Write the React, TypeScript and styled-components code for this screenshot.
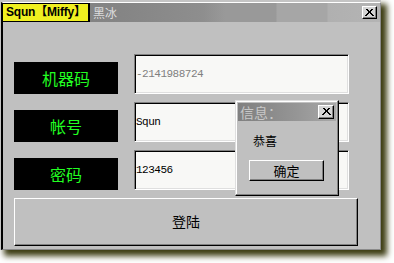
import React from 'react'
import styled, { createGlobalStyle } from 'styled-components'

const GlobalStyle = createGlobalStyle`
  html, body {
    margin: 0;
    padding: 0;
    background: #ffffff;
  }
  body {
    font-family: "Liberation Sans", "Noto Sans CJK SC", sans-serif;
  }
`

const rows = [
    { label: '机器码', value: '-2141988724', muted: true },
    { label: '帐号', value: 'Squn', muted: false },
    { label: '密码', value: '123456', muted: false },
]

const App = () => {
    return (
        <Page>
            <GlobalStyle />
            <Window>
                <Frame>
                    <TitleBar>
                        <Tag>Squn【Miffy】</Tag>
                        <TitleText>黑冰</TitleText>
                        <CloseBtn>
                            <CloseIcon />
                        </CloseBtn>
                    </TitleBar>
                    <Body>
                        <Rows>
                            {rows.map((r) => (
                                <Row key={r.label}>
                                    <Label>{r.label}</Label>
                                    <Field muted={r.muted}>{r.value}</Field>
                                </Row>
                            ))}
                        </Rows>
                        <LoginButton>登陆</LoginButton>
                    </Body>
                </Frame>
                <Dialog>
                    <DialogTitle>
                        <DialogTitleText>信息：</DialogTitleText>
                        <CloseBtn small>
                            <CloseIcon />
                        </CloseBtn>
                    </DialogTitle>
                    <DialogMsg>恭喜</DialogMsg>
                    <OkButton>确定</OkButton>
                </Dialog>
            </Window>
        </Page>
    )
}

const CloseIcon = () => (
    <svg width="9" height="8" viewBox="0 0 9 8">
        <path d="M1 0 L8 7 M8 0 L1 7 M2 0 L9 7 M7 0 L0 7" stroke="#000" strokeWidth="1" fill="none" />
    </svg>
)

const Page = styled.div`
  width: 394px;
  height: 263px;
  overflow: hidden;
`
const Window = styled.div`
  position: relative;
  width: 381px;
  height: 250px;
  box-sizing: border-box;
  padding-top: 2px;
  background: #c4c4c4;
  box-shadow: 5px 5px 6px 1px #3c3c12;
  display: flex;
  flex-direction: column;
`
const Frame = styled.div`
  flex: 1;
  margin-left: 1px;
  border-top: 1px solid #ffffff;
  border-left: 2px solid #000000;
  border-right: 1px solid #8a8a8a;
  border-bottom: 1px solid #8a8a8a;
  background: #c0c0c0;
  display: flex;
  flex-direction: column;
`
const TitleBar = styled.div`
  height: 19px;
  display: flex;
  align-items: center;
  background: linear-gradient(to right, #808080 0px, #858585 120px, #8e8e8e 200px, #999999 222px, #999999 273px, #a6a6a6 274px, #a6a6a6 324px, #b0b0b0 325px, #b4b4b4 100%);
  padding-right: 3px;
`
const Tag = styled.div`
  height: 19px;
  box-sizing: border-box;
  width: 88px;
  margin-left: -1px;
  padding-left: 3px;
  background: #f0f020;
  border: 1px solid #000;
  border-right-width: 2px;
  font-size: 12px;
  font-weight: bold;
  color: #000;
  line-height: 16px;
  white-space: nowrap;
  letter-spacing: -0.2px;
`
const TitleText = styled.div`
  margin-left: 3px;
  font-size: 12px;
  color: #dcdcdc;
  font-family: "Noto Sans CJK SC", sans-serif;
  flex: 1;
`
const CloseBtn = styled.div<{ small?: boolean }>`
  width: ${(p) => (p.small ? '16px' : '15px')};
  height: ${(p) => (p.small ? '14px' : '13px')};
  box-sizing: border-box;
  background: #d4d4d4;
  border-top: 1px solid #ffffff;
  border-left: 1px solid #ffffff;
  border-right: 1px solid #000;
  border-bottom: 1px solid #000;
  box-shadow: inset -1px -1px #808080;
  display: flex;
  align-items: center;
  justify-content: center;
`
const Body = styled.div`
  flex: 1;
  padding: 32px 0 0 11px;
  display: flex;
  flex-direction: column;
  gap: 8px;
`
const Rows = styled.div`
  display: flex;
  flex-direction: column;
  gap: 8px;
`
const Row = styled.div`
  display: flex;
  gap: 16px;
  height: 40px;
`
const Label = styled.div`
  width: 104px;
  height: 32px;
  margin-top: 8px;
  background: #000;
  color: #22ff22;
  font-family: "Noto Sans CJK SC", sans-serif;
  font-size: 16px;
  display: flex;
  align-items: center;
  justify-content: center;
`
const Field = styled.div<{ muted: boolean }>`
  width: 215px;
  height: 40px;
  box-sizing: border-box;
  background: #f8f8f6;
  border-top: 1px solid #808080;
  border-left: 1px solid #808080;
  border-right: 1px solid #ffffff;
  border-bottom: 1px solid #ffffff;
  box-shadow: inset 1px 1px #000, inset -1px -1px #dfdfdf;
  padding-left: 1px;
  display: flex;
  align-items: center;
  font-family: "Liberation Mono", monospace;
  font-size: 11px;
  letter-spacing: -0.5px;
  color: ${(p) => (p.muted ? '#808080' : '#000')};
`
const LoginButton = styled.div`
  width: 344px;
  height: 48px;
  box-sizing: border-box;
  border-top: 1px solid #fff;
  border-left: 1px solid #fff;
  border-right: 1px solid #000;
  border-bottom: 1px solid #000;
  box-shadow: inset -1px -1px #808080;
  display: flex;
  align-items: center;
  justify-content: center;
  padding-bottom: 3px;
  font-family: "Noto Sans CJK SC", sans-serif;
  font-size: 14px;
  color: #000;
`
const Dialog = styled.div`
  position: absolute;
  left: 235px;
  top: 100px;
  width: 104px;
  height: 96px;
  box-sizing: border-box;
  background: #c0c0c0;
  border-top: 1px solid #dfdfdf;
  border-left: 1px solid #dfdfdf;
  border-right: 1px solid #000;
  border-bottom: 1px solid #000;
  box-shadow: inset -1px -1px #808080, inset 1px 1px #ffffff;
  padding: 2px;
  display: flex;
  flex-direction: column;
  align-items: flex-start;
`
const DialogTitle = styled.div`
  align-self: stretch;
  height: 18px;
  display: flex;
  align-items: center;
  padding-right: 2px;
  background: linear-gradient(to right, #808080 0px, #8a8a8a 30px, #969696 60px, #a8a8a8 100%);
`
const DialogTitleText = styled.div`
  flex: 1;
  padding-left: 2px;
  font-family: "Noto Sans CJK SC", sans-serif;
  font-size: 14px;
  color: #c8c8c8;
  line-height: 18px;
`
const DialogMsg = styled.div`
  margin: 11px 0 0 15px;
  font-family: "Noto Sans CJK SC", sans-serif;
  font-size: 12px;
  color: #000;
`
const OkButton = styled.div`
  margin: 11px 0 0 11px;
  width: 75px;
  height: 21px;
  box-sizing: border-box;
  border-top: 1px solid #fff;
  border-left: 1px solid #fff;
  border-right: 1px solid #000;
  border-bottom: 1px solid #000;
  box-shadow: inset -1px -1px #808080;
  display: flex;
  align-items: center;
  justify-content: center;
  font-family: "Noto Sans CJK SC", sans-serif;
  font-size: 13px;
  color: #000;
`

export default App
